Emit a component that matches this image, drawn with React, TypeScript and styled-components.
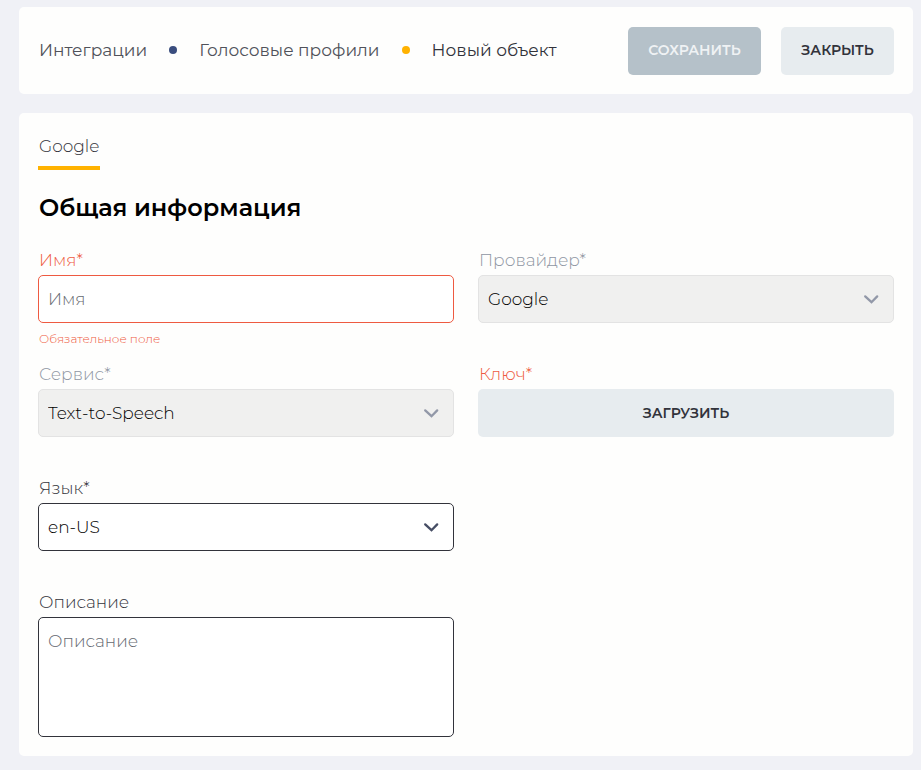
import React, { useState } from "react";
import styled, { createGlobalStyle, css } from "styled-components";

const color = {
  page: "#f0f1f6",
  surface: "#fefefd",
  ink: "#32333b",
  strong: "#000000",
  muted: "#8f96a3",
  error: "#ee5a41",
  accent: "#ffb200",
  navy: "#3a4d7e",
  soft: "#e7ecef",
};

const GlobalStyle = createGlobalStyle`
  *, *::before, *::after { box-sizing: border-box; }
  body {
    margin: 0;
    background: ${color.page};
    color: ${color.ink};
    font-family: "Montserrat", "Inter", sans-serif;
    font-size: 17px;
    font-weight: 300;
  }
  button, input, select, textarea { font: inherit; }
`;

const Page = styled.div`
  display: flex;
  flex-direction: column;
  gap: 19px;
  padding: 7px 8px 14px 19px;
`;

const TopBar = styled.header`
  display: flex;
  align-items: center;
  justify-content: space-between;
  gap: 20px;
  padding: 20px 19px 19px;
  background: ${color.surface};
  border-radius: 5px;
`;

const Crumbs = styled.nav`
  display: flex;
  align-items: center;
  gap: 22px;
  padding: 0 1px 2px;
  line-height: 24px;
  font-weight: 400;
  white-space: nowrap;
`;

const CrumbLink = styled.a`
  color: #50525a;
  text-decoration: none;
`;

const CrumbCurrent = styled.span`
  color: ${color.ink};
`;

const Dot = styled.span<{ $active?: boolean }>`
  width: 8px;
  height: 8px;
  border-radius: 50%;
  background: ${(p) => (p.$active ? color.accent : color.navy)};
`;

const Actions = styled.div`
  display: flex;
  gap: 20px;
`;

const Button = styled.button<{ $minWidth?: number }>`
  min-width: ${(p) => (p.$minWidth ? `${p.$minWidth}px` : "100%")};
  height: 48px;
  padding: 0 16px 2px;
  border: 0;
  border-radius: 5px;
  background: ${color.soft};
  color: ${color.ink};
  font-size: 14px;
  font-weight: 600;
  text-transform: uppercase;
  cursor: pointer;

  &:disabled {
    background: #b5c1c9;
    color: #eff2f4;
    cursor: default;
  }
`;

const UploadButton = styled(Button)`
  padding-bottom: 0;
`;

const Card = styled.main`
  padding: 19px;
  background: ${color.surface};
  border-radius: 5px;
`;

const Tabs = styled.div`
  display: flex;
  margin-bottom: 22px;
`;

const Tab = styled.button`
  padding: 0 1px 6px;
  border: 0;
  border-bottom: 4px solid ${color.accent};
  background: none;
  color: ${color.ink};
  line-height: 28px;
  cursor: pointer;
`;

const Title = styled.h1`
  margin: 0 0 24px;
  padding-left: 1px;
  color: ${color.strong};
  font-size: 24px;
  font-weight: 600;
  line-height: 32px;
`;

const Form = styled.form`
  display: grid;
  grid-template-columns: repeat(2, minmax(0, 1fr));
  gap: 15px 24px;
`;

const Field = styled.div<{ $newRow?: boolean }>`
  display: flex;
  flex-direction: column;
  grid-column-start: ${(p) => (p.$newRow ? 1 : "auto")};
`;

type Tone = "normal" | "muted" | "error";

const labelColor: Record<Tone, string> = {
  normal: color.ink,
  muted: color.muted,
  error: color.error,
};

const Label = styled.label<{ $tone?: Tone }>`
  margin-bottom: 3px;
  padding-left: 1px;
  line-height: 24px;
  color: ${(p) => labelColor[p.$tone ?? "normal"]};
`;

const Hint = styled.div`
  min-height: 16px;
  margin-top: 8px;
  padding-left: 1px;
  color: ${color.error};
  font-size: 12px;
  line-height: 16px;
`;

const controlBase = css`
  display: block;
  width: 100%;
  height: 48px;
  padding: 0 9px;
  border: 1px solid ${color.ink};
  border-radius: 5px;
  background: #fff;
  color: ${color.strong};
  line-height: 24px;

  &::placeholder {
    color: #656971;
    opacity: 1;
  }
`;

const TextInput = styled.input`
  ${controlBase}

  &[aria-invalid="true"] {
    border-color: ${color.error};
  }
`;

const TextArea = styled.textarea`
  ${controlBase}
  height: 120px;
  padding: 11px 9px;
  resize: none;
`;

const SelectBox = styled.div`
  display: grid;
  align-items: center;

  & > * {
    grid-area: 1 / 1;
  }
`;

const Select = styled.select`
  ${controlBase}
  padding-right: 40px;
  appearance: none;

  &:disabled {
    border-color: #e3e3e3;
    background: #f0f0ef;
    opacity: 1;
  }
`;

const Chevron = styled.svg<{ $muted?: boolean }>`
  justify-self: end;
  margin-right: 15px;
  color: ${(p) => (p.$muted ? "#9298a8" : "#464d64")};
  pointer-events: none;
`;

function SelectField(props: {
  id: string;
  label: string;
  options: string[];
  disabled?: boolean;
}) {
  const { id, label, options, disabled } = props;
  return (
    <>
      <Label htmlFor={id} $tone={disabled ? "muted" : "normal"}>
        {label}
      </Label>
      <SelectBox>
        <Select id={id} disabled={disabled}>
          {options.map((option) => (
            <option key={option}>{option}</option>
          ))}
        </Select>
        <Chevron $muted={disabled} width="16" height="10" viewBox="0 0 16 10" aria-hidden="true">
          <path
            d="M2.2 2.4L8.5 8.2L14.2 2.4"
            fill="none"
            stroke="currentColor"
            strokeWidth="2.3"
            strokeLinecap="round"
            strokeLinejoin="miter"
          />
        </Chevron>
      </SelectBox>
      <Hint />
    </>
  );
}

export default function App() {
  const [name, setName] = useState("");
  const missing = name.trim() === "";

  return (
    <>
      <GlobalStyle />
      <Page>
        <TopBar>
          <Crumbs>
            <CrumbLink href="#integrations">Интеграции</CrumbLink>
            <Dot />
            <CrumbLink href="#profiles">Голосовые профили</CrumbLink>
            <Dot $active />
            <CrumbCurrent>Новый объект</CrumbCurrent>
          </Crumbs>
          <Actions>
            <Button type="submit" form="profile" disabled={missing} $minWidth={133}>
              Сохранить
            </Button>
            <Button type="button" $minWidth={113}>
              Закрыть
            </Button>
          </Actions>
        </TopBar>

        <Card>
          <Tabs role="tablist">
            <Tab type="button" role="tab" aria-selected="true">
              Google
            </Tab>
          </Tabs>
          <Title>Общая информация</Title>
          <Form id="profile" onSubmit={(e) => e.preventDefault()}>
            <Field>
              <Label htmlFor="name" $tone={missing ? "error" : "normal"}>
                Имя*
              </Label>
              <TextInput
                id="name"
                placeholder="Имя"
                value={name}
                aria-invalid={missing}
                aria-describedby="name-hint"
                onChange={(e) => setName(e.target.value)}
              />
              <Hint id="name-hint">{missing ? "Обязательное поле" : ""}</Hint>
            </Field>
            <Field>
              <SelectField id="provider" label="Провайдер*" options={["Google"]} disabled />
            </Field>
            <Field>
              <SelectField id="service" label="Сервис*" options={["Text-to-Speech"]} disabled />
            </Field>
            <Field>
              <Label htmlFor="key" $tone="error">
                Ключ*
              </Label>
              <UploadButton id="key" type="button">
                Загрузить
              </UploadButton>
            </Field>
            <Field $newRow>
              <SelectField id="language" label="Язык*" options={["en-US", "ru-RU"]} />
            </Field>
            <Field $newRow>
              <Label htmlFor="description">Описание</Label>
              <TextArea id="description" placeholder="Описание" />
            </Field>
          </Form>
        </Card>
      </Page>
    </>
  );
}
